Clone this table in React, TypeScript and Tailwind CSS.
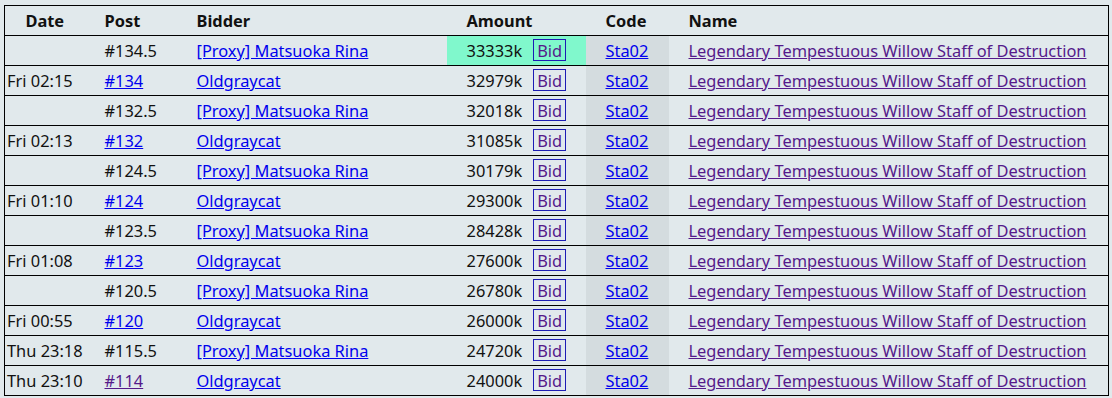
const rows = [
  { date: '', post: '#134.5', postLink: false, bidder: '[Proxy] Matsuoka Rina', amount: '33333k', top: true },
  { date: 'Fri 02:15', post: '#134', postLink: true, bidder: 'Oldgraycat', amount: '32979k' },
  { date: '', post: '#132.5', postLink: false, bidder: '[Proxy] Matsuoka Rina', amount: '32018k' },
  { date: 'Fri 02:13', post: '#132', postLink: true, bidder: 'Oldgraycat', amount: '31085k' },
  { date: '', post: '#124.5', postLink: false, bidder: '[Proxy] Matsuoka Rina', amount: '30179k' },
  { date: 'Fri 01:10', post: '#124', postLink: true, bidder: 'Oldgraycat', amount: '29300k' },
  { date: '', post: '#123.5', postLink: false, bidder: '[Proxy] Matsuoka Rina', amount: '28428k' },
  { date: 'Fri 01:08', post: '#123', postLink: true, bidder: 'Oldgraycat', amount: '27600k' },
  { date: '', post: '#120.5', postLink: false, bidder: '[Proxy] Matsuoka Rina', amount: '26780k' },
  { date: 'Fri 00:55', post: '#120', postLink: true, bidder: 'Oldgraycat', amount: '26000k' },
  { date: 'Thu 23:18', post: '#115.5', postLink: false, bidder: '[Proxy] Matsuoka Rina', amount: '24720k' },
  { date: 'Thu 23:10', post: '#114', postLink: true, bidder: 'Oldgraycat', amount: '24000k', visited: true },
];

const App = () => {
  return (
    <div className="min-h-screen bg-[#e1e9ec] pt-[5px] pl-[4px] font-['Noto_Sans',sans-serif] text-[16.4px] text-[#111]">
      <table className="w-[1105px] table-fixed border-collapse border border-black">
        <colgroup>
          <col className="w-[80px]" />
          <col className="w-[92px]" />
          <col className="w-[270px]" />
          <col className="w-[139px]" />
          <col className="w-[83px]" />
          <col />
        </colgroup>
        <thead>
          <tr className="h-[30px] border-b border-black">
            <th className="pt-[2px] text-center font-bold">Date</th>
            <th className="pt-[2px] pl-5 text-left font-bold">Post</th>
            <th className="pt-[2px] pl-5 text-left font-bold">Bidder</th>
            <th className="pt-[2px] pl-5 text-left font-bold">Amount</th>
            <th className="pt-[2px] pl-5 text-left font-bold">Code</th>
            <th className="pt-[2px] pl-5 text-left font-bold">Name</th>
          </tr>
        </thead>
        <tbody>
          {rows.map((r, i) => (
            <tr key={i} className="h-[30px] border-b border-black">
              <td className="pt-[2px] pl-[2px] whitespace-nowrap">{r.date}</td>
              <td className="pt-[2px] pl-5">
                {r.postLink ? (
                  <a href="#" className={r.visited ? 'text-[#551a8b] underline' : 'text-[#0000ee] underline'}>{r.post}</a>
                ) : (
                  r.post
                )}
              </td>
              <td className="pt-[2px] pl-5 whitespace-nowrap">
                <a href="#" className="text-[#0000ee] underline">{r.bidder}</a>
              </td>
              <td className={r.top ? 'pl-5 whitespace-nowrap bg-[#80f8cc]' : 'pl-5 whitespace-nowrap'}>
                <span className="inline-block pt-[2px]">{r.amount}</span>
                <a href="#" className="ml-[11px] inline-block border border-[#1c1cb4] px-[3px] pt-[1px] leading-[19px] text-[#551a8b]">Bid</a>
              </td>
              <td className="pt-[2px] pl-5 bg-[#d4dcdf]">
                <a href="#" className="text-[#0000ee] underline">Sta02</a>
              </td>
              <td className="pt-[2px] pl-5 whitespace-nowrap">
                <a href="#" className="text-[#551a8b] underline">Legendary Tempestuous Willow Staff of Destruction</a>
              </td>
            </tr>
          ))}
        </tbody>
      </table>
    </div>
  );
};

export default App;
